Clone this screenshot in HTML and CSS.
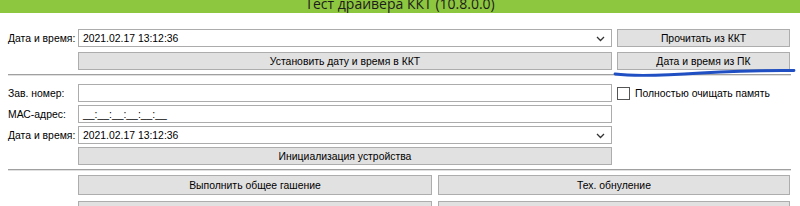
FILE: index.html
```html
<!DOCTYPE html>
<html lang="ru">

<head>
    <meta charset="UTF-8" />
    <title>Тест драйвера ККТ</title>
    <link rel="stylesheet" href="styles.css">
</head>

<body>
    <div class="titlebar">
        <span>Тест драйвера ККТ (10.8.0.0)</span>
    </div>

    <div class="panel">
        <div class="grid first">
            <label class="lbl">Дата и время:</label>
            <div class="field combo">
                <span>2021.02.17 13:12:36</span>
                <svg class="chev" width="9" height="6" viewBox="0 0 9 6"><path d="M1 1 L4.5 4.5 L8 1" fill="none" stroke="#333" stroke-width="1.3"/></svg>
            </div>
            <button class="btn">Прочитать из ККТ</button>

            <div></div>
            <button class="btn">Установить дату и время в ККТ</button>
            <div class="marked">
                <button class="btn">Дата и время из ПК</button>
                <svg class="mark" width="190" height="14" viewBox="0 0 190 14"><path d="M4 8 C 20 10, 45 10, 90 7 S 165 4.5, 183 4.5" fill="none" stroke="#1f4fc2" stroke-width="2.8" stroke-linecap="round"/></svg>
            </div>
        </div>

        <div class="sep"></div>

        <div class="grid second">
            <label class="lbl">Зав. номер:</label>
            <div class="field"></div>
            <div class="check">
                <span class="box"></span>
                <span>Полностью очищать память</span>
            </div>

            <label class="lbl">МАС-адрес:</label>
            <div class="field"><span>__:__:__:__:__:__</span></div>
            <div></div>

            <label class="lbl">Дата и время:</label>
            <div class="field combo">
                <span>2021.02.17 13:12:36</span>
                <svg class="chev" width="9" height="6" viewBox="0 0 9 6"><path d="M1 1 L4.5 4.5 L8 1" fill="none" stroke="#333" stroke-width="1.3"/></svg>
            </div>
            <div></div>

            <div></div>
            <button class="btn">Инициализация устройства</button>
            <div></div>
        </div>

        <div class="sep last"></div>

        <div class="actions">
            <button class="btn tall">Выполнить общее гашение</button>
            <button class="btn tall">Тех. обнуление</button>
            <button class="btn tall"></button>
            <button class="btn tall"></button>
        </div>
    </div>
</body>

</html>
```

FILE: styles.css
```css
* {
    margin: 0;
    padding: 0;
    box-sizing: border-box;
}

body {
    width: 800px;
    height: 206px;
    overflow: hidden;
    background: #ffffff;
    font-family: "Liberation Sans", Arial, sans-serif;
    font-size: 10.4px;
    color: #000;
}

.titlebar {
    height: 13px;
    background: #8dc63f;
    overflow: hidden;
    text-align: center;
}

.titlebar span {
    display: block;
    font-family: "Open Sans", sans-serif;
    font-size: 14px;
    line-height: 15px;
    margin-top: -4px;
    color: #1c1c1c;
}

.panel {
    padding: 16px 0 0 8px;
}

.grid {
    display: grid;
    grid-template-columns: 65px 534px 173px;
    column-gap: 5px;
}

.grid.first {
    row-gap: 5px;
    grid-auto-rows: 18px;
}

.grid.second {
    row-gap: 3px;
    grid-auto-rows: 18px;
}

.lbl {
    display: flex;
    align-items: center;
    white-space: nowrap;
}

.field {
    position: relative;
    display: flex;
    align-items: center;
    border: 1px solid #acacac;
    background: #fff;
    padding-left: 4px;
}

.combo .chev {
    position: absolute;
    right: 6px;
    top: 6px;
}

.btn {
    font-family: inherit;
    font-size: 10.4px;
    color: #000;
    background: #e1e1e1;
    border: 1px solid #adadad;
    height: 100%;
    width: 100%;
}

.marked {
    position: relative;
}

.marked .mark {
    position: absolute;
    left: -6px;
    top: 14px;
}

.sep {
    width: 783px;
    height: 2px;
    border-top: 1px solid #a0a0a0;
    border-bottom: 1px solid #e0e0e0;
    margin: 4px 0 8px;
}

.sep.last {
    margin-bottom: 4px;
}

.check {
    display: flex;
    align-items: center;
    gap: 5px;
    white-space: nowrap;
}

.box {
    width: 13px;
    height: 13px;
    border: 1px solid #555;
    background: #fff;
}

.actions {
    display: grid;
    grid-template-columns: 354px 352px;
    column-gap: 6px;
    row-gap: 6px;
    margin-left: 70px;
}

.btn.tall {
    height: 20px;
}
```
